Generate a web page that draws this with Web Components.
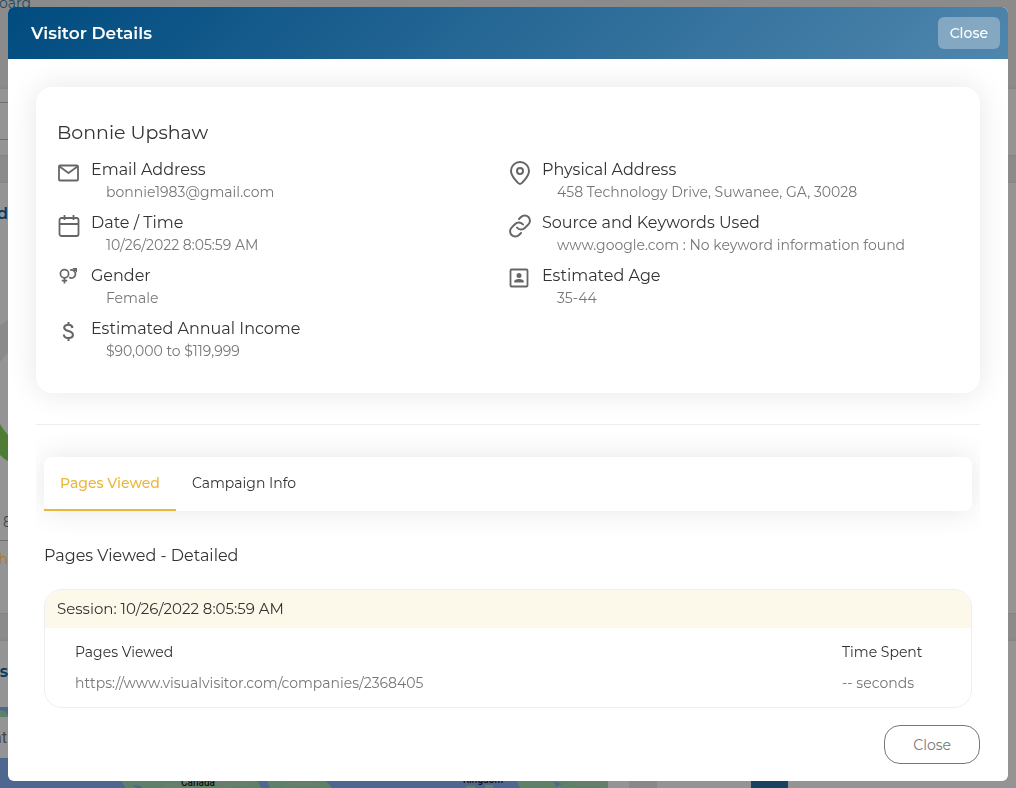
<!DOCTYPE html>
<html lang="en">
<head>
<meta charset="utf-8">
<meta name="viewport" content="width=device-width, initial-scale=1">
<title>Visitor Details</title>
<style>
  body {
    margin: 0;
    height: 100vh;
    overflow: hidden;
    font-family: Montserrat, Inter, "Liberation Sans", sans-serif;
    color: #333;
    --brand: #00497c;
    --accent: #e9b73b;
    --muted: #777;
    --line: #eee;
  }
</style>
</head>
<body>
<dashboard-page></dashboard-page>

<modal-dialog heading="Visitor Details">
  <visitor-card name="Bonnie Upshaw">
    <detail-item icon="mail" label="Email Address">bonnie1983@gmail.com</detail-item>
    <detail-item icon="pin" label="Physical Address">458 Technology Drive, Suwanee, GA, 30028</detail-item>
    <detail-item icon="calendar" label="Date / Time">10/26/2022 8:05:59 AM</detail-item>
    <detail-item icon="link" label="Source and Keywords Used">www.google.com : No keyword information found</detail-item>
    <detail-item icon="gender" label="Gender">Female</detail-item>
    <detail-item icon="portrait" label="Estimated Age">35-44</detail-item>
    <detail-item icon="dollar" label="Estimated Annual Income">$90,000 to $119,999</detail-item>
  </visitor-card>
  <tab-bar tabs="Pages Viewed|Campaign Info"></tab-bar>
  <session-list heading="Pages Viewed - Detailed"></session-list>
</modal-dialog>

<script>
const ICONS = {
  mail: '<g fill="none" stroke="currentColor" stroke-width="1.800" stroke-linejoin="round"><rect x="2" y="4.5" width="19" height="15" rx="1"/><path d="M2.5 5.5l9 6.500 9-6.500"/></g>',
  pin: '<g fill="none" stroke="currentColor" stroke-width="2" stroke-linejoin="round"><path d="M12 23c-1.500 0-9-7.800-9-13a9 9 0 0 1 18 0c0 5.200-7.500 13-9 13z"/><circle cx="12" cy="10" r="3"/></g>',
  calendar: '<g fill="none" stroke="currentColor" stroke-width="1.800" stroke-linejoin="round"><rect x="2.500" y="4" width="19" height="18" rx="2"/><path d="M2.500 10h19M7.500 1v5M16.500 1v5"/></g>',
  link: '<g fill="none" stroke="currentColor" stroke-width="2" stroke-linecap="round" stroke-linejoin="round"><path d="M9 13.500a5.200 5.200 0 0 0 7.800.5l3.600-3.600a5.200 5.200 0 0 0-7.400-7.400l-2 2"/><path d="M15 10.500a5.200 5.200 0 0 0-7.800-.5l-3.600 3.600a5.200 5.200 0 0 0 7.400 7.400l2-2"/></g>',
  gender: '<g fill="none" stroke="currentColor" stroke-width="1.700"><circle cx="7.500" cy="6.800" r="4.100"/><path d="M7.500 11v5.500M4.800 13.700h5.400M13 3.300a4 4 0 1 1-.8 7M16.200 4.300l2.300-2.300"/></g><path d="M15.300 1H20v4.700z" fill="currentColor"/>',
  portrait: '<rect x="2.500" y="2.500" width="17" height="17" rx="1" fill="none" stroke="currentColor" stroke-width="1.800"/><circle cx="11" cy="8.500" r="2.500" fill="currentColor"/><path d="M6.200 15.500v-1c0-2 3.200-2.600 4.800-2.600s4.800.6 4.800 2.600v1z" fill="currentColor"/>',
  dollar: '<path d="M15.500 8c-.3-2.200-1.900-3.200-4.200-3.200-2.500 0-4.100 1.200-4.100 3 0 4.300 8.700 2.300 8.700 7 0 2.100-1.800 3.300-4.400 3.300-2.700 0-4.500-1.300-4.700-3.600M11.500 2v3M11.500 18v3" fill="none" stroke="currentColor" stroke-width="2.100"/>'
};

// Helper: opens the shadow root and fills it
function render(el, html) {
  el.attachShadow({ mode: 'open' }).innerHTML = html;
}

class LineIcon extends HTMLElement {
  connectedCallback() {
    if (this.shadowRoot) return;
    render(this, `
      <style>
        :host { display: block; width: 24px; height: 24px; color: #666; }
        svg { display: block; width: 100%; height: 100%; }
      </style>
      <svg viewBox="0 0 24 24" aria-hidden="true">${ICONS[this.getAttribute('name')]}</svg>
    `);
  }
}

class DetailItem extends HTMLElement {
  connectedCallback() {
    if (this.shadowRoot) return;
    render(this, `
      <style>
        :host { display: flex; gap: 10px; }
        line-icon { margin-top: 3px; }
        .label { font-size: 16px; line-height: 24px; }
        .value { font-size: 14px; line-height: 21px; padding-left: 15px; color: var(--muted); }
      </style>
      <line-icon name="${this.getAttribute('icon')}"></line-icon>
      <div>
        <div class="label">${this.getAttribute('label')}</div>
        <div class="value"><slot></slot></div>
      </div>
    `);
  }
}

class VisitorCard extends HTMLElement {
  connectedCallback() {
    if (this.shadowRoot) return;
    render(this, `
      <style>
        :host { display: block; padding: 32px 21px 31px; border-radius: 16px; background: #fff; box-shadow: 0 0 30px rgba(0, 0, 0, .1); }
        h2 { margin: 0 0 11px; font-size: 19px; line-height: 28px; font-weight: 400; }
        .grid { display: grid; grid-template-columns: 1fr 1fr; row-gap: 8px; }
      </style>
      <h2>${this.getAttribute('name')}</h2>
      <div class="grid"><slot></slot></div>
    `);
  }
}

class TabBar extends HTMLElement {
  connectedCallback() {
    if (this.shadowRoot) return;
    const tabs = this.getAttribute('tabs').split('|');
    render(this, `
      <style>
        :host { display: block; margin-top: 31px; padding: 32px 8px 24px; border-top: 1px solid var(--line); overflow: hidden; }
        .bar { display: flex; border-radius: 8px; background: #fff; box-shadow: 0 0 30px rgba(0, 0, 0, .1); }
        button { box-sizing: border-box; height: 54px; padding: 0 16px; border: 0; border-bottom: 2px solid transparent; background: none; font: inherit; font-size: 14px; color: inherit; }
        button[aria-selected="true"] { color: var(--accent); border-color: var(--accent); font-weight: 500; }
      </style>
      <div class="bar" role="tablist">
        ${tabs.map((t, i) => `<button type="button" role="tab" aria-selected="${i === 0}">${t}</button>`).join('')}
      </div>
    `);
    // Switches the active tab
    this.shadowRoot.querySelectorAll('button').forEach((btn, i, all) => {
      btn.addEventListener('click', () => all.forEach(b => b.setAttribute('aria-selected', b === btn)));
    });
  }
}

class SessionList extends HTMLElement {
  connectedCallback() {
    if (this.shadowRoot) return;
    render(this, `
      <style>
        :host { display: block; padding: 8px 8px 0; }
        h3 { margin: 0 0 20px; font-size: 16px; line-height: 26px; font-weight: 400; }
        section { border: 1px solid var(--line); border-radius: 18px; overflow: hidden; }
        h4 { margin: 0; padding: 0 12px; font-size: 15px; line-height: 38px; font-weight: 400; background: #fcf8ea; }
        table { width: 100%; border-collapse: collapse; margin: 8px 0 9px; font-size: 14px; }
        th, td { padding: 0 0 0 30px; height: 31px; line-height: 20px; text-align: left; font-weight: 400; }
        td { color: var(--muted); }
        .time { width: 129px; padding-left: 0; }
      </style>
      <h3>${this.getAttribute('heading')}</h3>
      <section>
        <h4>Session: 10/26/2022 8:05:59 AM</h4>
        <table>
          <thead><tr><th scope="col">Pages Viewed</th><th scope="col" class="time">Time Spent</th></tr></thead>
          <tbody><tr><td>https://www.visualvisitor.com/companies/2368405</td><td class="time">-- seconds</td></tr></tbody>
        </table>
      </section>
    `);
  }
}

class ModalDialog extends HTMLElement {
  connectedCallback() {
    if (this.shadowRoot) return;
    render(this, `
      <style>
        :host { display: block; position: fixed; inset: 0; padding: 7px 8px; overflow: auto; }
        .dialog { border-radius: 6px; overflow: hidden; background: #fff; }
        header { display: flex; align-items: center; justify-content: space-between; padding: 10px 8px 10px 23px; color: #fff; background: linear-gradient(135deg, #004b7f, #4f86ad); }
        h1 { margin: 0; font-size: 17px; line-height: 24px; font-weight: 600; }
        button { font: inherit; font-size: 14px; }
        header button { height: 32px; padding: 0 12px; border: 0; border-radius: 6px; font-weight: 500; color: #fff; background: #84a8c2; }
        main { padding: 28px 28px 17px; }
        footer { display: flex; justify-content: flex-end; padding: 0 28px 17px; }
        footer button { height: 39px; padding: 0 28px; border: 1px solid var(--muted); border-radius: 16px; color: var(--muted); background: #fff; }
      </style>
      <div class="dialog" role="dialog" aria-labelledby="title">
        <header>
          <h1 id="title">${this.getAttribute('heading')}</h1>
          <button type="button">Close</button>
        </header>
        <main><slot></slot></main>
        <footer><button type="button">Close</button></footer>
      </div>
    `);
    this.shadowRoot.querySelectorAll('button').forEach(btn => {
      btn.addEventListener('click', () => this.remove());
    });
  }
}

// The dimmed page that stays behind the dialog
class DashboardPage extends HTMLElement {
  connectedCallback() {
    if (this.shadowRoot) return;
    render(this, `
      <style>
        :host { display: block; height: 100%; overflow: hidden; background: #8b8b8b; color: #444; }
        .crumb { display: flex; justify-content: flex-end; width: 31px; height: 89px; font-size: 14px; line-height: 6px; color: #1f4a66; }
        .card { background: #949494; box-shadow: 0 0 2px #777; overflow: hidden; }
        .filter { height: 66px; margin-bottom: 28px; }
        .filter i { display: block; width: 40px; height: 36px; margin-top: 13px; border: solid #707070; border-width: 1px 0; }
        .edge { display: flex; justify-content: flex-end; width: 8px; font-size: 14px; }
        .title { height: 40px; padding-top: 20px; line-height: 22px; font-size: 16px; font-weight: 600; color: #06395c; }
        .stats { height: 430px; margin-bottom: 28px; }
        .ring { display: block; width: 8px; height: 230px; margin-top: 40px; }
        .count { width: 12px; height: 27px; border-bottom: 1px solid #707070; }
        .more { height: 36px; line-height: 36px; color: #a67b20; }
        .world { display: flex; flex-direction: column; height: 147px; }
        .world .title { height: 46px; }
        .row { display: flex; height: 81px; }
        .map { flex: 0 0 608px; height: 81px; }
        .bars { flex: 1; display: flex; align-items: flex-end; }
        .bars i { height: 10px; width: 28px; margin-left: 21px; background: #888; }
        .bars i + i { width: 37px; margin-left: 94px; background: #174360; }
      </style>
      <div class="crumb">board</div>
      <div class="card filter"><i></i></div>
      <div class="card stats">
        <div class="edge title">d</div>
        <svg class="ring" viewBox="0 0 8 230"><path d="M0 43Q4 39 8 37V70Q4 73 0 79z" fill="#8a8a8a"/><path d="M0 141Q4 148 8 152V178Q4 176 0 172z" fill="#4f7c35"/></svg>
        <div class="edge count">8</div>
        <div class="edge more">h</div>
      </div>
      <div class="card world">
        <div class="edge title">s</div>
        <div class="row">
          <svg class="map" viewBox="0 0 608 81" aria-hidden="true">
            <path fill="#4e6790" d="M0 0h608v81H0z"/>
            <path fill="#5d8069" d="M0 3l5 1 3 4v3H0zM121 74h137l3 7H126zM267 74h59l6 7h-62zM517 74h91v7h-88zM466 79h9v2h-9zM485 78h8v3h-8z"/>
            <path fill="#4e6790" d="M133 78l8 1 1 2h-6zM227 74l7 4-7 2zM554 74l8 3-6 3z"/>
            <path fill="#667f6d" d="M163 76h18v5h-18zM217 74h38l-9 5-28 2zM284 75h30l7 4-36 1zM568 74h40v6l-30-1z"/>
            <path fill="#949494" d="M0 10h8v41H0z"/>
            <g font-family="Roboto, sans-serif" font-weight="500" fill="#111">
              <text x="-7" y="36" font-size="16" font-weight="400" fill="#444">at</text>
              <text x="181" y="79" font-size="10">Canada</text>
              <text x="463" y="76" font-size="10">Kingdom</text>
            </g>
          </svg>
          <div class="bars"><i></i><i></i></div>
        </div>
      </div>
    `);
  }
}

customElements.define('line-icon', LineIcon);
customElements.define('detail-item', DetailItem);
customElements.define('visitor-card', VisitorCard);
customElements.define('tab-bar', TabBar);
customElements.define('session-list', SessionList);
customElements.define('dashboard-page', DashboardPage);
customElements.define('modal-dialog', ModalDialog);
</script>
</body>
</html>
